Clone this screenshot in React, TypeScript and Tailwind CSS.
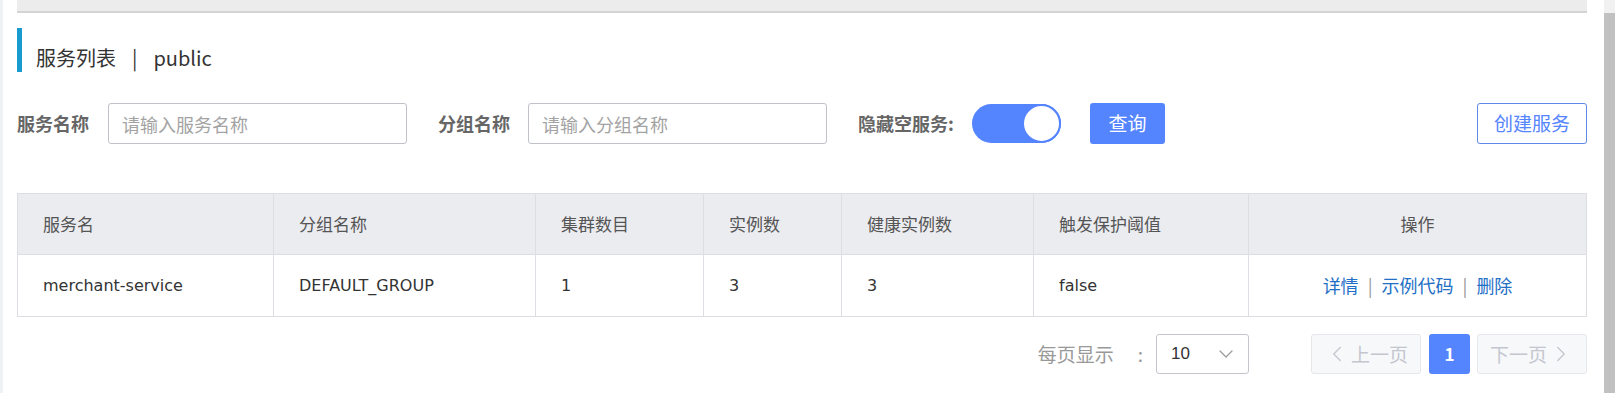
import { ChevronDown, ChevronLeft, ChevronRight } from "lucide-react";

const CJK = "font-['Noto_Sans_CJK_SC','Noto_Sans',sans-serif]";

const COLUMNS = [
  { title: "服务名", width: "w-[256px]" },
  { title: "分组名称", width: "w-[262px]" },
  { title: "集群数目", width: "w-[168px]" },
  { title: "实例数", width: "w-[138px]" },
  { title: "健康实例数", width: "w-[192px]" },
  { title: "触发保护阈值", width: "w-[215px]" },
];

const ROW = ["merchant-service", "DEFAULT_GROUP", "1", "3", "3", "false"];

export default function App() {
  return (
    <div className={`w-[1615px] h-[393px] bg-white flex overflow-hidden ${CJK}`}>
      {/* left edge */}
      <div className="w-[3px] h-full bg-[#eff1f4]" />

      {/* main content */}
      <div className="flex-1 pl-[14px] pr-[17px]">
        <div className="h-[13px] bg-[#ececec] border-b-2 border-[#d4d4d4]" />

        {/* Title */}
        <div className="mt-[15px] h-[44px] border-l-[5px] border-[#1a9bd0] pl-[14px] pt-[14px]">
          <span className="text-[20px] leading-[32px] text-[#333]">
            服务列表<span className="mx-[16px]">|</span>public
          </span>
        </div>

        {/* Filters */}
        <div className="mt-[31px] flex items-center h-[41px]">
          <span className="text-[18px] font-bold text-[#666] w-[73px] whitespace-nowrap">服务名称</span>
          <input
            placeholder="请输入服务名称"
            className="ml-[18px] w-[299px] h-[41px] border border-[#c0c2c9] rounded-[3px] px-[13px] text-[18px] placeholder-[#a3a3a3] outline-none"
          />
          <span className="ml-[31px] text-[18px] font-bold text-[#666] w-[72px] whitespace-nowrap">分组名称</span>
          <input
            placeholder="请输入分组名称"
            className="ml-[18px] w-[299px] h-[41px] border border-[#c0c2c9] rounded-[3px] px-[13px] text-[18px] placeholder-[#a3a3a3] outline-none"
          />
          <span className="ml-[31px] text-[18px] font-bold text-[#666] w-[98px] whitespace-nowrap">隐藏空服务:</span>
          <div className="ml-[16px] w-[89px] h-[39px] rounded-full bg-[#5584ff] flex items-center justify-end">
            <div className="w-[39px] h-[39px] rounded-full bg-white border-2 border-[#5584ff]" />
          </div>
          <button className="ml-[29px] w-[75px] h-[41px] rounded-[3px] bg-[#5584ff] text-white text-[19px]">
            查询
          </button>
          <div className="flex-1" />
          <button className="w-[110px] h-[41px] rounded-[3px] border border-[#5f88e8] bg-white text-[#5584ff] text-[19px]">
            创建服务
          </button>
        </div>

        {/* Table */}
        <div className="mt-[49px] border border-[#dcdee3]">
          <div className="flex h-[61px] bg-[#ebecf0] border-b border-[#dcdee3] text-[17px] text-[#555]">
            {COLUMNS.map((c) => (
              <div key={c.title} className={`${c.width} flex items-center pl-[25px] border-r border-[#dcdee3]`}>
                {c.title}
              </div>
            ))}
            <div className="flex-1 flex items-center justify-center">操作</div>
          </div>
          <div className="flex h-[61px] text-[#333]">
            {ROW.map((v, i) => (
              <div
                key={i}
                className={`${COLUMNS[i].width} flex items-center pl-[25px] border-r border-[#dcdee3] font-['DejaVu_Sans','Noto_Sans_CJK_SC',sans-serif] text-[16px]`}
              >
                {v}
              </div>
            ))}
            <div className="flex-1 flex items-center justify-center text-[18px] text-[#236fc6]">
              <span>详情</span>
              <span className="mx-[9px] text-[#999]">|</span>
              <span>示例代码</span>
              <span className="mx-[9px] text-[#999]">|</span>
              <span>删除</span>
            </div>
          </div>
        </div>

        {/* Pagination */}
        <div className="mt-[17px] flex items-center justify-end h-[40px]">
          <span className="text-[19px] text-[#999]">每页显示</span>
          <span className="ml-[24px] text-[19px] text-[#999]">:</span>
          <div className="ml-[13px] w-[93px] h-[40px] border border-[#c4c6cf] rounded-[3px] flex items-center justify-between pl-[14px] pr-[10px]">
            <span className="text-[17px] text-[#333] font-['Liberation_Sans',sans-serif]">10</span>
            <ChevronDown className="w-[24px] h-[24px] text-[#999]" strokeWidth={1.2} />
          </div>
          <div className="ml-[62px] w-[110px] h-[40px] rounded-[3px] border border-[#e6e7eb] bg-[#f7f8fa] flex items-center justify-center text-[19px] text-[#c4c6cf]">
            <ChevronLeft className="w-[26px] h-[26px]" strokeWidth={1.2} />
            <span className="ml-[1px]">上一页</span>
          </div>
          <div className="ml-[8px] w-[41px] h-[40px] rounded-[3px] bg-[#5584ff] text-white flex items-center justify-center text-[17px] font-bold">
            1
          </div>
          <div className="ml-[7px] w-[110px] h-[40px] rounded-[3px] border border-[#e6e7eb] bg-[#f7f8fa] flex items-center justify-center text-[19px] text-[#c4c6cf]">
            <span className="mr-[1px]">下一页</span>
            <ChevronRight className="w-[26px] h-[26px]" strokeWidth={1.2} />
          </div>
        </div>
      </div>

      {/* scrollbar */}
      <div className="w-[11px] h-full flex flex-col">
        <div className="h-[13px] bg-[#f1f1f1]" />
        <div className="flex-1 bg-[#c1c1c1]" />
      </div>
    </div>
  );
}
